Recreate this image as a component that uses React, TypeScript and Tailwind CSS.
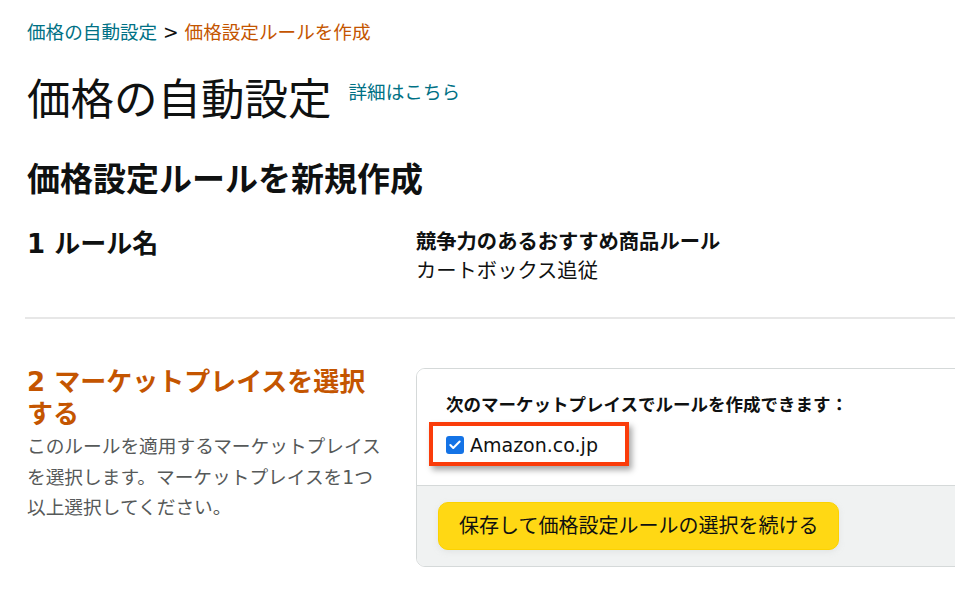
import { Check } from 'lucide-react';

const font = { fontFamily: '"DejaVu Sans", "Noto Sans CJK JP", sans-serif' };

const App = () => {
  return (
    <div className="w-[955px] h-[597px] overflow-hidden bg-white text-[#0f1111]" style={font}>
      <div className="pl-[27px] pt-[20px] w-[1100px]">
        {/* Breadcrumb */}
        <div className="text-[18.6px] leading-[26px] flex">
          <span className="text-[#007185]">価格の自動設定</span>
          <span className="whitespace-pre text-[#0f1111]"> &gt; </span>
          <span className="text-[#c45500]">価格設定ルールを作成</span>
        </div>

        {/* Title */}
        <div className="flex items-start mt-[28px]">
          <h1 className="text-[43.5px] leading-[52px] font-normal">価格の自動設定</h1>
          <a className="ml-[17px] mt-[6px] text-[18.6px] leading-[26px] text-[#007185]">詳細はこちら</a>
        </div>

        <h2 className="mt-[34px] text-[33px] leading-[40px] font-bold">価格設定ルールを新規作成</h2>

        {/* Step 1 */}
        <div className="flex mt-[28px]">
          <div className="w-[389px] shrink-0 text-[26px] leading-[32px] font-bold">1 ルール名</div>
          <div className="text-[20.3px] leading-[29px]">
            <div className="font-bold">競争力のあるおすすめ商品ルール</div>
            <div>カートボックス追従</div>
          </div>
        </div>

        <div className="mt-[31px] -ml-[2px] h-[2px] bg-[#e7e7e7]" />

        {/* Step 2 */}
        <div className="flex items-start mt-[47px]">
          <div className="w-[389px] shrink-0 pr-[33px]">
            <div className="text-[26px] leading-[32px] font-bold text-[#c45500]">2 マーケットプレイスを選択する</div>
            <p className="mt-[2px] text-[18.7px] leading-[30.5px] text-[#565959]">
              このルールを適用するマーケットプレイスを選択します。マーケットプレイスを1つ以上選択してください。
            </p>
          </div>

          <div className="relative mt-[2px] w-[640px] rounded-[9px] border border-[#d5d9d9] overflow-hidden">
            <div className="px-[29px] pt-[23px] pb-[27px] bg-white">
              <div className="text-[17.5px] leading-[26px] font-bold">次のマーケットプレイスでルールを作成できます：</div>
              <label className="mt-[14px] flex items-center h-[26px]">
                <span className="w-[18px] h-[18px] rounded-[3px] bg-[#1473e6] flex items-center justify-center">
                  <Check className="w-[14px] h-[14px] text-white" strokeWidth={3.5} />
                </span>
                <span className="ml-[6px] text-[19px]">Amazon.co.jp</span>
              </label>
            </div>
            <div className="border-t border-[#d5d9d9] bg-[#f0f2f2] pl-[21px] py-[16px]">
              <button className="h-[48px] px-[20px] rounded-[10px] bg-[#ffd814] border border-[#fcd200] text-[20px] text-[#0f1111] shadow-[0_2px_5px_rgba(213,217,217,0.5)]">
                保存して価格設定ルールの選択を続ける
              </button>
            </div>

            {/* annotation */}
            <div className="absolute left-[12px] top-[53px] w-[200px] h-[44px] border-[4px] border-[#fa3c0a] shadow-[3px_4px_6px_rgba(0,0,0,0.35)]" />
          </div>
        </div>
      </div>
    </div>
  );
};

export default App;
